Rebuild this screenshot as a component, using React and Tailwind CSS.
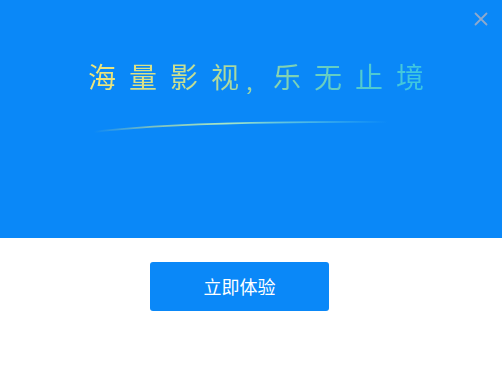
import React from 'react';

const App = () => {
  return (
    <div className="w-[502px] h-[387px] bg-white flex flex-col" style={{ fontFamily: '"Noto Sans CJK SC", "Noto Sans", sans-serif' }}>
      <div className="relative h-[238px] bg-[#0a88f8] flex flex-col">
        <button className="absolute right-[13px] top-[11px] w-[16px] h-[16px] flex items-center justify-center">
          <svg width="14" height="14" viewBox="0 0 14 14">
            <path d="M1.5 1.5 L12.5 12.5 M12.5 1.5 L1.5 12.5" stroke="#8fa9cc" strokeWidth="1.8" strokeLinecap="round" />
          </svg>
        </button>
        <div className="mt-[58px] ml-[88px] self-start flex items-center gap-[13px] h-[36px] text-[28px] leading-none font-normal bg-clip-text text-transparent bg-[linear-gradient(90deg,#f2e577_0%,#cfe08e_25%,#a6d8a2_45%,#7fd2b4_60%,#55cbcc_80%,#3cc6e2_100%)]">
          <span className="w-[28px]">海</span>
          <span className="w-[28px]">量</span>
          <span className="w-[28px]">影</span>
          <span className="w-[28px]">视</span>
          <span className="w-[14px] ml-[-6px] text-[24px] self-end pb-[2px]">,</span>
          <span className="w-[28px]">乐</span>
          <span className="w-[28px]">无</span>
          <span className="w-[28px]">止</span>
          <span className="w-[28px]">境</span>
        </div>
        <svg className="mt-[21px] ml-[90px]" width="310" height="20" viewBox="0 0 310 20">
          <defs>
            <linearGradient id="arc" x1="0" y1="0" x2="1" y2="0">
              <stop offset="0" stopColor="#d8e98f" stopOpacity="0" />
              <stop offset="0.2" stopColor="#c9e89a" stopOpacity="0.6" />
              <stop offset="0.45" stopColor="#a8e6c4" stopOpacity="1" />
              <stop offset="0.7" stopColor="#7fdcd8" stopOpacity="0.6" />
              <stop offset="1" stopColor="#5ed4e8" stopOpacity="0" />
            </linearGradient>
          </defs>
          <path d="M4 17 Q 90 6 298 7" stroke="url(#arc)" strokeWidth="1.8" fill="none" />
        </svg>
      </div>
      <div className="flex pl-[150px] pt-[24px]">
        <button className="w-[179px] h-[49px] rounded-[3px] bg-[#0a88f8] text-white text-[18px] flex items-center justify-center">
          立即体验
        </button>
      </div>
    </div>
  );
};

export default App;
